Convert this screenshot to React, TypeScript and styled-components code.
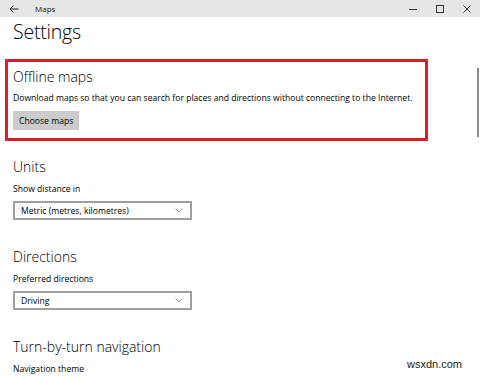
import styled, { createGlobalStyle } from 'styled-components'

const GlobalStyle = createGlobalStyle`
    html, body {
        margin: 0;
        padding: 0;
        background: #ffffff;
    }
    body {
        width: 480px;
        height: 377px;
        overflow: hidden;
        font-family: 'Open Sans', 'Noto Sans', sans-serif;
        color: #000000;
    }
`

const Window = styled.div`
    position: relative;
    width: 480px;
    height: 377px;
    overflow: hidden;
    background: #ffffff;
`

const TitleBar = styled.div`
    display: flex;
    align-items: center;
    height: 17px;
    background-color: #e6e6e6;
`

const BackButton = styled.div`
    width: 27px;
    height: 17px;
    display: flex;
    align-items: center;
    justify-content: center;
`

const AppName = styled.span`
    margin-left: 8px;
    font-size: 8px;
    color: #222222;
`

const Controls = styled.div`
    margin-left: auto;
    display: flex;
`

const ControlButton = styled.div`
    width: 27px;
    height: 17px;
    display: flex;
    align-items: center;
    justify-content: center;
`

const Content = styled.div`
    padding: 0 0 0 13px;
`

const PageTitle = styled.h1`
    margin: 3px 0 0 0;
    font-size: 19.5px;
    line-height: 24px;
    font-weight: 300;
    letter-spacing: -0.2px;
`

const Highlight = styled.div`
    margin: 15px 0 0 -8px;
    width: 412px;
    border: 3px solid #d81f2c;
    padding: 6px 0 8px 5px;
`

const Section = styled.section<{ first?: boolean }>`
    margin-top: ${p => (p.first ? '17px' : '28px')};
`

const Heading = styled.h2`
    margin: 0;
    font-size: 14px;
    line-height: 18px;
    font-weight: 300;
`

const Text = styled.p<{ gap?: number }>`
    margin: ${p => p.gap ?? 7}px 0 0 0;
    font-size: 8.6px;
    line-height: 12px;
    white-space: nowrap;
`

const Button = styled.button`
    display: block;
    margin-top: 7px;
    height: 19px;
    padding: 0 6px;
    border: none;
    background-color: #cccccc;
    font-family: inherit;
    font-size: 8.6px;
    color: #000000;
`

const Select = styled.div`
    display: flex;
    align-items: center;
    justify-content: space-between;
    box-sizing: border-box;
    margin-top: 6px;
    width: 179px;
    height: 19px;
    border: 2px solid #a0a0a0;
    padding: 0 7px 0 6px;
    font-size: 8.6px;
`

const Scrollbar = styled.div`
    position: absolute;
    left: 477px;
    top: 68px;
    width: 2px;
    height: 69px;
    background-color: #8c8c8c;
`

const Watermark = styled.div`
    position: absolute;
    left: 407px;
    top: 358px;
    font-family: 'Liberation Sans', Arial, sans-serif;
    font-size: 11px;
    color: #1a1a1a;
`

const Chevron = () => (
    <svg width="8" height="5" viewBox="0 0 8 5">
        <path d="M0.5 0.5 L4 4 L7.5 0.5" fill="none" stroke="#9a9a9a" strokeWidth="1" />
    </svg>
)

const Dropdown = ({ value }: { value: string }) => (
    <Select>
        <span>{value}</span>
        <Chevron />
    </Select>
)

export default function App() {
    return (
        <Window>
            <GlobalStyle />
            <TitleBar>
                <BackButton>
                    <svg width="10" height="8" viewBox="0 0 10 8">
                        <path d="M9.5 4 H1 M4.5 0.5 L1 4 L4.5 7.5" fill="none" stroke="#222" strokeWidth="1" />
                    </svg>
                </BackButton>
                <AppName>Maps</AppName>
                <Controls>
                    <ControlButton>
                        <svg width="8" height="8" viewBox="0 0 8 8">
                            <path d="M0 4.5 H8" stroke="#333" strokeWidth="1" />
                        </svg>
                    </ControlButton>
                    <ControlButton>
                        <svg width="8" height="8" viewBox="0 0 8 8">
                            <rect x="0.5" y="0.5" width="7" height="7" fill="none" stroke="#333" strokeWidth="1" />
                        </svg>
                    </ControlButton>
                    <ControlButton>
                        <svg width="8" height="8" viewBox="0 0 8 8">
                            <path d="M0.5 0.5 L7.5 7.5 M7.5 0.5 L0.5 7.5" stroke="#333" strokeWidth="1" />
                        </svg>
                    </ControlButton>
                </Controls>
            </TitleBar>
            <Content>
                <PageTitle>Settings</PageTitle>
                <Highlight>
                    <Heading>Offline maps</Heading>
                    <Text gap={6}>Download maps so that you can search for places and directions without connecting to the Internet.</Text>
                    <Button>Choose maps</Button>
                </Highlight>
                <Section first>
                    <Heading>Units</Heading>
                    <Text>Show distance in</Text>
                    <Dropdown value="Metric (metres, kilometres)" />
                </Section>
                <Section>
                    <Heading>Directions</Heading>
                    <Text>Preferred directions</Text>
                    <Dropdown value="Driving" />
                </Section>
                <Section>
                    <Heading>Turn-by-turn navigation</Heading>
                    <Text>Navigation theme</Text>
                </Section>
            </Content>
            <Scrollbar />
            <Watermark>wsxdn.com</Watermark>
        </Window>
    )
}
